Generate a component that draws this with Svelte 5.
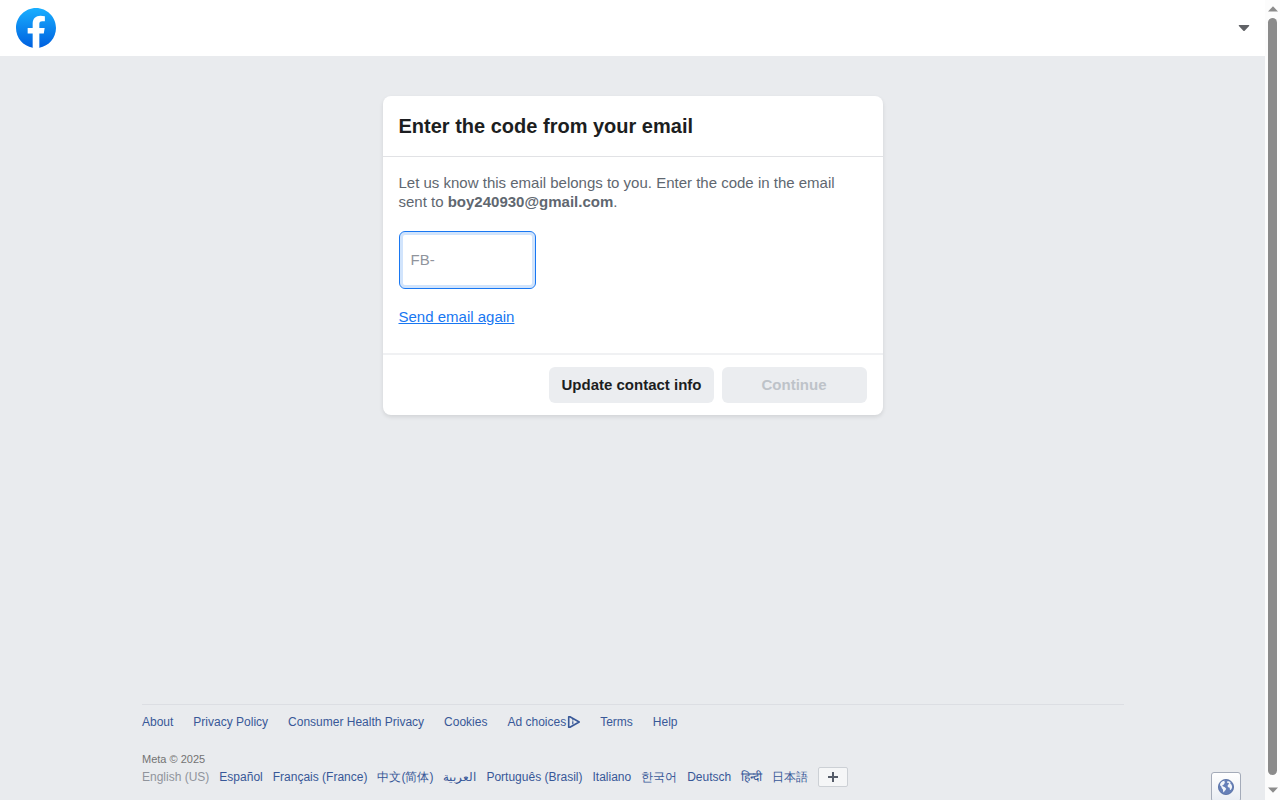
<script>
  const links = ['About', 'Privacy Policy', 'Consumer Health Privacy', 'Cookies', 'Ad choices', 'Terms', 'Help'];
  const languages = ['Español', 'Français (France)', '中文(简体)', 'العربية', 'Português (Brasil)', 'Italiano', '한국어', 'Deutsch', 'हिन्दी', '日本語'];
</script>

<div class="window">
  <div class="page">
    <header>
      <svg class="logo" viewBox="0 0 36 36" width="40" height="40">
        <defs>
          <linearGradient id="blue" x1="50%" x2="50%" y1="97%" y2="0%">
            <stop offset="0%" stop-color="#0062e0" />
            <stop offset="100%" stop-color="#19afff" />
          </linearGradient>
        </defs>
        <path fill="url(#blue)" d="M15 35.8C6.5 34.3 0 26.9 0 18 0 8.1 8.1 0 18 0s18 8.1 18 18c0 8.9-6.5 16.3-15 17.8l-1-.8h-4l-1 .8z" />
        <path fill="#fff" d="M25 23l.8-5H21v-3.5c0-1.4.5-2.5 2.7-2.5H26V7.4c-1.3-.2-2.7-.4-4-.4-4.1 0-7 2.5-7 7v4h-4.5v5H15v12.7c1 .2 2 .3 3 .3s2-.1 3-.3V23h4z" />
      </svg>
      <svg class="caret" viewBox="0 0 12 8" width="12" height="8">
        <path fill="#606266" d="M1.300 1h9.400c.5 0 .7.6.4 1L6.700 6.700c-.4.400-1 .400-1.400 0L.9 2C.6 1.600.8 1 1.300 1z" />
      </svg>
    </header>

    <main>
      <section class="card">
        <h1>Enter the code from your email</h1>
        <div class="body">
          <p>Let us know this email belongs to you. Enter the code in the email sent to <b>boy240930@gmail.com</b>.</p>
          <div class="code">FB-</div>
          <a class="again" href="#again">Send email again</a>
        </div>
        <div class="actions">
          <button class="update">Update contact info</button>
          <button class="continue" disabled>Continue</button>
        </div>
      </section>
    </main>

    <footer>
      <nav class="links">
        {#each links as link}
          <a href="#link">{link}{#if link === 'Ad choices'}<svg viewBox="0 0 14 14" width="14" height="14"><path d="M2.700 1.700v10.600h1.200L13.200 7 3.900 1.700H2.700z" fill="none" stroke="#385898" stroke-width="1.600" stroke-linejoin="round" /><path d="M6.800 4.300v1.100M6.800 6.200v3" stroke="#385898" stroke-width="1.200" /></svg>{/if}</a>
        {/each}
      </nav>
      <div class="meta">Meta © 2025</div>
      <nav class="languages">
        <span>English (US)</span>
        {#each languages as language}
          <a href="#language">{language}</a>
        {/each}
        <button class="more" aria-label="More languages">
          <svg viewBox="0 0 10 10" width="10" height="10"><path d="M4 0h2v4h4v2H6v4H4V6H0V4h4z" fill="#555c69" /></svg>
        </button>
      </nav>
    </footer>

    <div class="globe">
      <svg viewBox="0 0 16 16" width="16" height="16">
        <circle cx="8" cy="8" r="7.600" fill="#6680b8" stroke="#4f689f" stroke-width=".8" />
        <path fill="#f2f5fa" d="M3.200 3.200 5 2 7 1.700 6.200 3 7.200 3.700 5.900 4.900 5.500 6 4.300 6 4.800 7.200 6.900 8.300 8.200 9.700 7.400 11.300 6.500 12 5.900 13.400 5.200 12.800 4.900 10.600 3.700 8.900 3.300 7.500 2 6.300 2.200 4.700z" />
        <path fill="#f2f5fa" d="m9.500 1.900 1.900.6 1.300 1.300-.5.7 1.400 1.300.5 2.100-.5 1.800-1 1.400-.7-.3-.2-2-1.500-.5-.7-1.400.7-1.300 1-.7-.8-1.100-1.300.1z" />
      </svg>
    </div>
  </div>

  <div class="scrollbar">
    <svg viewBox="0 0 10 6" width="10" height="6"><path d="M0 5.500 5 .2l5 5.300z" fill="#8b8b8b" /></svg>
    <div class="thumb"></div>
    <svg viewBox="0 0 10 6" width="10" height="6"><path d="M0 .5 5 5.800 10 .5z" fill="#8b8b8b" /></svg>
  </div>
</div>

<style>
  :global(body) { overflow: hidden; }
  .window {
    display: flex;
    width: 1280px;
    height: 800px;
    overflow: hidden;
    font-family: "Liberation Sans", Arial, sans-serif;
  }
  .page {
    position: relative;
    display: flex;
    flex-direction: column;
    width: 1265px;
    height: 800px;
    background: #e9ebee;
    overflow: hidden;
  }
  header {
    box-sizing: border-box;
    display: flex;
    justify-content: space-between;
    align-items: center;
    height: 56px;
    padding: 0 15px 0 16px;
    background: #fff;
  }
  header svg { display: block; }
  main { flex: 1; padding-top: 40px; }
  .card {
    box-sizing: border-box;
    width: 500px;
    height: 319px;
    margin: 0 auto;
    border-radius: 8px;
    background: #fff;
    box-shadow: 0 2px 4px rgba(0, 0, 0, .1);
  }
  h1 {
    box-sizing: border-box;
    height: 61px;
    margin: 0;
    padding: 18px 16px;
    border-bottom: 1px solid #e1e2e5;
    color: #1c1e21;
    font-size: 20px;
    line-height: 24px;
  }
  .body {
    box-sizing: border-box;
    height: 196px;
    padding: 16px 16px 0;
    font-size: 15px;
    line-height: 19px;
  }
  p { margin: 0 0 20px; color: #606770; }
  .code {
    box-sizing: border-box;
    width: 137px;
    height: 58px;
    margin-bottom: 18px;
    padding: 0 11px;
    border: 1px solid #1877f2;
    border-radius: 6px;
    box-shadow: inset 0 0 0 3px #d1e4fc;
    color: #90949c;
    line-height: 56px;
  }
  .again { color: #1877f2; text-decoration: underline; }
  .actions {
    box-sizing: border-box;
    display: flex;
    justify-content: flex-end;
    gap: 8px;
    height: 62px;
    padding: 12px 16px;
    border-top: 2px solid #f0f1f3;
  }
  button { font-family: inherit; }
  .actions button {
    height: 36px;
    padding: 0 0 2px;
    border: 0;
    border-radius: 6px;
    background: #ebedf0;
    color: #1c1e21;
    font-size: 15px;
    font-weight: bold;
  }
  .actions .update { width: 165px; padding-left: 1px; }
  .actions .continue { width: 145px; color: #bec3c9; }
  footer {
    box-sizing: border-box;
    width: 982px;
    height: 96px;
    margin-left: 142px;
    border-top: 1px solid #dcdee3;
    font-size: 12px;
    line-height: 16px;
    white-space: nowrap;
  }
  footer a { color: #385898; text-decoration: none; }
  .links { display: flex; gap: 20px; height: 46px; padding-top: 9px; box-sizing: border-box; }
  .links a { display: flex; height: 16px; }
  .links svg { margin: 1px 0 0; }
  .meta { height: 16px; color: #737373; font-size: 11px; }
  .languages { display: flex; gap: 10px; align-items: center; height: 20px; }
  .languages span { color: #90949c; }
  .more {
    box-sizing: border-box;
    display: flex;
    align-items: center;
    justify-content: center;
    width: 30px;
    height: 20px;
    padding: 0;
    border: 1px solid #ccd0d5;
    border-radius: 2px;
    background: #f5f6f7;
  }
  .globe {
    position: absolute;
    right: 24px;
    bottom: -2px;
    box-sizing: border-box;
    width: 30px;
    height: 30px;
    padding: 6px;
    border: 1px solid #a4abb9;
    border-radius: 3px;
    background: linear-gradient(#fff, #e9edf3);
  }
  .globe svg { display: block; }
  .scrollbar {
    box-sizing: border-box;
    display: flex;
    flex-direction: column;
    align-items: center;
    gap: 7px;
    width: 15px;
    height: 800px;
    padding: 6px 0 0;
    background: #fcfcfc;
  }
  .scrollbar svg { flex: none; display: block; }
  .thumb { flex: none; width: 9px; height: 757px; margin: -1px 0 5px; border-radius: 5px; background: #8b8b8b; }
</style>
